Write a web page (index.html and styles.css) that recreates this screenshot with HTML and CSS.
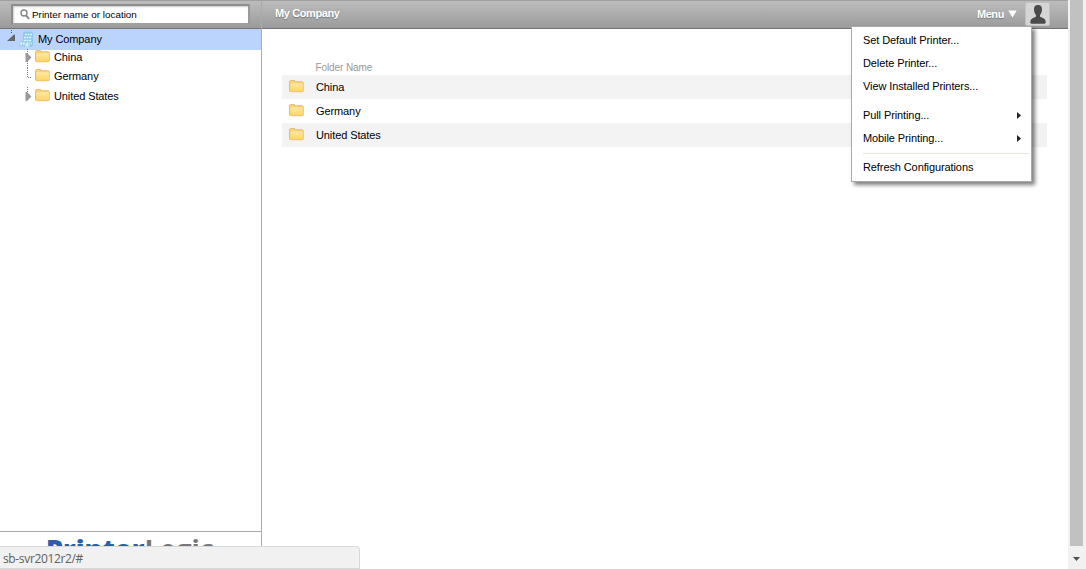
FILE: index.html
```html
<!DOCTYPE html>
<html lang="en">
<head>
<meta charset="utf-8">
<title>My Company</title>
<link rel="stylesheet" href="styles.css">
</head>
<body>
<svg class="defs" width="0" height="0">
  <defs>
    <linearGradient id="fold" x1="0" y1="0" x2="0" y2="1"><stop offset="0" stop-color="#ffe9a3"/><stop offset="1" stop-color="#fdd468"/></linearGradient>
    <symbol id="folder" viewBox="0 0 15 13">
      <path d="M.5 10.5V2Q.5.5 2 .5H5Q6 .5 6.500 1.700H13Q14.300 1.700 14.300 3V10.500Q14.300 11.700 13 11.700H2Q.5 11.700.5 10.500Z" fill="#f8d37b" stroke="#e3b45c" stroke-width=".8"/>
      <path d="M1.100 3.600Q1.100 2.800 2 2.800H13.500Q14.300 2.800 14.300 3.600V10.600Q14.300 11.600 13.200 11.600H2.300Q1.100 11.600 1.100 10.600Z" fill="url(#fold)" stroke="#f0c364" stroke-width=".4"/>
    </symbol>
  </defs>
</svg>
<div class="app">
  <aside class="sidebar">
    <div class="bar searchbar">
      <div class="search">
        <svg width="10" height="11" viewBox="0 0 10 11"><circle cx="4" cy="4" r="3" fill="none" stroke="#858585" stroke-width="1.4"/><path d="M6.2 6.5L9 10" stroke="#858585" stroke-width="1.9"/></svg>
        <span>Printer name or location</span>
      </div>
    </div>
    <nav class="tree">
      <div class="node root">
        <svg class="lines" width="34" height="21" viewBox="0 0 34 21">
          <path d="M11.5 1V5" stroke="#555" stroke-dasharray="1 1"/>
          <path d="M7 12L14 5.500L15 6V12Z" fill="#666"/>
          <path d="M23 4L25 2.500H32L33 4V17L31 18H23Z" fill="#8ec9ed"/>
          <path d="M25 5.500H32M24 8.500H32M24 11.500H32M26 14.500H32" stroke="#e9f6fd" stroke-width="1.600" stroke-dasharray="1.800 .8"/>
          <path d="M19 13L22 11L25 12.500V17L22 18.500L19 17Z" fill="#a5d3ee"/><path d="M25 14L28 12.500L30 14V17.500L27 19L25 18Z" fill="#b9def2"/>
          <path d="M20 14.500H22M23 14.500H24.500M26 16H28" stroke="#f0faff" stroke-width="1.300"/>
        </svg>
        <span>My Company</span>
      </div>
      <div class="node n1"><svg class="twig" width="12" height="19" viewBox="0 0 12 19"><path d="M3.500 0V19" stroke="#777" stroke-dasharray="1 1"/><path d="M1.500 4H3L7.500 8.500L3 13H1.500Z" fill="#999"/></svg><svg class="folder"><use href="#folder"/></svg><span>China</span></div>
      <div class="node n2"><svg class="twig" width="12" height="19" viewBox="0 0 12 19"><path d="M3.500 0V10M4 9.500H8" stroke="#777" stroke-dasharray="1 1"/></svg><svg class="folder"><use href="#folder"/></svg><span>Germany</span></div>
      <div class="node n3"><svg class="twig" width="12" height="20" viewBox="0 0 12 20"><path d="M3.500 0V14" stroke="#777" stroke-dasharray="1 1"/><path d="M1.500 5H3L7.500 9.500L3 14H1.500Z" fill="#999"/></svg><svg class="folder"><use href="#folder"/></svg><span>United States</span></div>
    </nav>
    <footer class="brand"><span class="printer">Printer</span><span class="logic">Logic</span></footer>
  </aside>
  <main class="main">
    <header class="bar titlebar">
      <h1>My Company</h1>
      <div class="menu-button">Menu<svg width="9" height="8" viewBox="0 0 9 8"><path d="M.3.500H8.700L4.500 7.500Z" fill="#fff"/></svg></div>
      <div class="avatar"><svg width="16" height="19" viewBox="0 0 16 19"><path d="M8 0C11 0 12.200 2 12 4.800C11.900 7.500 10.800 9.300 10 10V11.500Q10.500 12.300 13 13Q15.700 14 15.800 17Q15.800 18.700 14.500 18.700H1.500Q.2 18.700.2 17Q.3 14 3 13Q5.500 12.300 6 11.500V10C5.200 9.300 4.100 7.500 4 4.800C3.800 2 5 0 8 0Z" fill="#4a4a4a"/></svg></div>
    </header>
    <section class="list">
      <div class="head">Folder Name</div>
      <div class="row odd"><svg class="folder"><use href="#folder"/></svg><span>China</span></div>
      <div class="row"><svg class="folder"><use href="#folder"/></svg><span>Germany</span></div>
      <div class="row odd"><svg class="folder"><use href="#folder"/></svg><span>United States</span></div>
    </section>
  </main>
  <div class="scrollbar"><div class="thumb"></div><svg width="7" height="4" viewBox="0 0 7 4"><path d="M0 0H7L3.500 4Z" fill="#505050"/></svg></div>
</div>
<div class="dropdown">
  <div class="item">Set Default Printer...</div>
  <div class="item">Delete Printer...</div>
  <div class="item">View Installed Printers...</div>
  <div class="item gap">Pull Printing...<svg width="4" height="7" viewBox="0 0 4 7"><path d="M0 0L4 3.500L0 7Z" fill="#222"/></svg></div>
  <div class="item">Mobile Printing...<svg width="4" height="7" viewBox="0 0 4 7"><path d="M0 0L4 3.500L0 7Z" fill="#222"/></svg></div>
  <div class="rule"></div>
  <div class="item">Refresh Configurations</div>
</div>
<div class="status">sb-svr2012r2/#</div>
</body>
</html>
```
FILE: styles.css
```css
* { box-sizing: border-box; }
body { margin: 0; width: 1086px; height: 569px; overflow: hidden; background: #fff; color: #000; font: 11px/13px "Liberation Sans", Arial, sans-serif; letter-spacing: -0.1px; }
svg { display: block; flex: none; }
.defs { position: absolute; }
.app { display: flex; height: 569px; }
.sidebar { display: flex; flex-direction: column; width: 262px; border-right: 1px solid #aaa; }
.main { flex: 1; }
.bar { display: flex; height: 29px; border-top: 1px solid #a0a0a0; border-bottom: 1px solid #737373; background: linear-gradient(#bcbcbc, #9b9b9b); }
.searchbar { padding: 3px 0 0 11px; }
.search { display: flex; align-items: center; width: 239px; height: 21px; padding: 0 0 1px 7px; gap: 2px; border: 2px solid #8d8d8d; border-right-color: #999; border-bottom-color: #a0a0a0; background: #fff; box-shadow: inset 1px 1px 2px #ccc; font-size: 9.900px; letter-spacing: 0; }
.tree { flex: 1; }
.node { display: flex; height: 19px; line-height: 19px; padding-left: 24px; }
.node .folder { margin: 2px 4px 0 -1px; }
.folder { width: 15px; height: 13px; }
.root { height: 21px; line-height: 21px; padding: 0; background: #bad4fd; }
.root span { margin-left: 4px; }
.n1 { height: 18px; line-height: 15px; }
.n1 .folder { margin-top: 0; }
.n1 .twig { margin-top: -1px; }
.n2 { line-height: 17px; }
.n2 .folder { margin-top: 1px; }
.n3 { height: 20px; line-height: 18px; }
.brand { height: 38px; padding: 1px 0 0 46px; overflow: hidden; border-top: 1px solid #aaa; font: bold 27px/31px "Open Sans", sans-serif; letter-spacing: 0; white-space: nowrap; }
.printer { color: #2d5dab; font-weight: 800; letter-spacing: 0; }
.logic { color: #777; font-weight: 700; }
.titlebar { padding-left: 13px; color: #fff; font-weight: bold; letter-spacing: -0.4px; text-shadow: 0 1px 1px #777; }
h1 { margin: 6px 0 0; font-size: 11px; line-height: 13px; }
.menu-button { display: flex; gap: 4px; margin: 7px 8px 0 auto; }
.menu-button svg { margin-top: 2px; }
.avatar { display: flex; justify-content: center; width: 25px; height: 24px; margin: 1px 18px 0 0; padding-top: 2px; border: 1px solid #c2c2c2; border-radius: 2px; background: #d5d5d5; }
.list { padding: 32px 21px 0 20px; }
.head { height: 14px; padding-left: 33.500px; color: #999; font-size: 10px; line-height: 14px; }
.row { display: flex; align-items: center; height: 24px; padding-left: 7px; }
.row .folder { margin: -2px 12px 0 0; }
.row.odd { background: #f3f3f3; }
.scrollbar { display: flex; flex-direction: column; align-items: center; width: 18px; padding-right: 1px; background: #f1f1f1; }
.thumb { width: 13px; height: 546px; margin-bottom: 11px; background: #c1c1c1; }
.dropdown { position: absolute; left: 851px; top: 26px; width: 181px; height: 156px; padding-top: 2px; border: 1px solid #aaa; background: #fff; box-shadow: 3px 3px 4px rgba(0,0,0,.5); }
.item { display: flex; align-items: center; justify-content: space-between; height: 23px; padding: 0 10px 0 11px; }
.gap { margin-top: 6px; }
.rule { height: 1px; margin: 3px 2px 2px 11px; background: #e0e8dc; }
.status { position: absolute; left: 0; top: 546px; width: 360px; height: 23px; padding: 3px 0 0 3px; border: 1px solid #d8d8d8; border-left: 0; border-radius: 0 4px 0 0; background: #f1f1f1; color: #606060; font: 12px/17px "Open Sans", sans-serif; letter-spacing: -0.35px; }
```
